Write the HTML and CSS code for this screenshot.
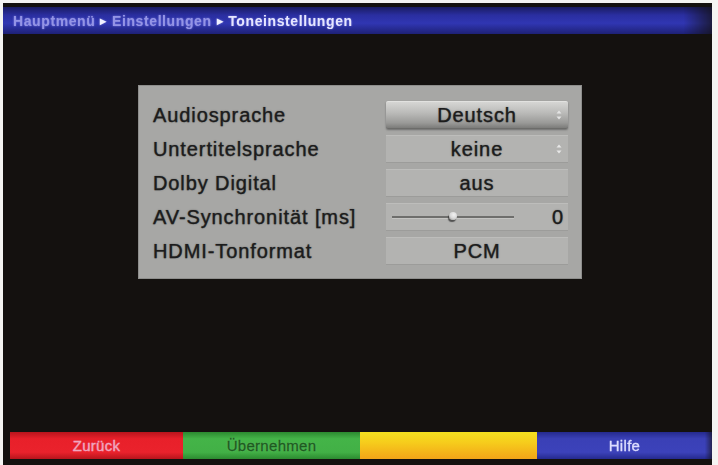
FILE: index.html
```html
<!DOCTYPE html>
<html lang="de">
<head>
<meta charset="utf-8">
<title>Toneinstellungen</title>
<link rel="stylesheet" href="styles.css">
</head>
<body>
<div class="screen">
  <div class="topbar">
    <span class="crumb">Hauptmenü</span>
    <span class="sep">▸</span>
    <span class="crumb">Einstellungen</span>
    <span class="sep">▸</span>
    <span class="crumb current">Toneinstellungen</span>
  </div>

  <div class="panel">
    <div class="row">
      <div class="label">Audiosprache</div>
      <div class="value selected">Deutsch
        <svg class="arrows" viewBox="0 0 6 10" width="6" height="10"><path d="M3 0.5 L5.5 3.5 L0.5 3.5 Z M3 9.5 L5.5 6.5 L0.5 6.5 Z" fill="#e4e4e4"/></svg>
      </div>
    </div>
    <div class="row">
      <div class="label">Untertitelsprache</div>
      <div class="value">keine
        <svg class="arrows" viewBox="0 0 6 10" width="6" height="10"><path d="M3 0.5 L5.5 3.5 L0.5 3.5 Z M3 9.5 L5.5 6.5 L0.5 6.5 Z" fill="#e8e8e8"/></svg>
      </div>
    </div>
    <div class="row">
      <div class="label">Dolby Digital</div>
      <div class="value">aus</div>
    </div>
    <div class="row">
      <div class="label">AV-Synchronität [ms]</div>
      <div class="value slider-box">
        <div class="track"><span class="knob"></span></div>
        <span class="num">0</span>
      </div>
    </div>
    <div class="row">
      <div class="label">HDMI-Tonformat</div>
      <div class="value">PCM</div>
    </div>
  </div>

  <div class="spacer"></div>

  <div class="footer">
    <div class="key red">Zurück</div>
    <div class="key green">Übernehmen</div>
    <div class="key yellow"></div>
    <div class="key blue">Hilfe</div>
  </div>
</div>
</body>
</html>
```

FILE: styles.css
```css
html, body {
  margin: 0;
  padding: 0;
  background: #f4f4f2;
  width: 718px;
  height: 465px;
  overflow: hidden;
}

.screen {
  margin: 3px 0 0 3px;
  width: 709px;
  height: 462px;
  background: #14110f;
  display: flex;
  flex-direction: column;
  font-family: "Liberation Sans", Arial, sans-serif;
}

.topbar {
  margin-top: 4px;
  height: 27px;
  display: flex;
  align-items: center;
  gap: 5px;
  padding-left: 10px;
  background: linear-gradient(to bottom, #1a1c62 0%, #2a2ea0 30%, #3036b2 60%, #1e2176 100%);
  font-size: 14px;
  font-weight: bold;
  letter-spacing: 0.6px;
  color: #9494e6;
  text-shadow: 0 0 2px rgba(180, 180, 255, 0.6);
  -webkit-mask-image: linear-gradient(to right, #000 96%, rgba(0,0,0,0.3) 100%);
}

.crumb.current {
  color: #e6e6ff;
}

.sep {
  color: #f0f0ff;
  font-size: 12px;
}

.panel {
  margin: 51px 0 0 135px;
  width: 444px;
  box-sizing: border-box;
  padding: 15px 13px 13px 14px;
  background: #a7a7a5;
  border: 1px solid #8e8e8c;
  display: flex;
  flex-direction: column;
  gap: 6px;
}

.row {
  display: flex;
  align-items: center;
  justify-content: space-between;
  height: 28px;
}

.label,
.value {
  font-size: 20px;
  letter-spacing: 0.9px;
  color: #1c1c1c;
  -webkit-text-stroke: 0.25px #1c1c1c;
  text-shadow: 0 0 1.5px rgba(30, 30, 30, 0.6);
}

.value {
  position: relative;
  width: 182px;
  height: 28px;
  box-sizing: border-box;
  display: flex;
  align-items: center;
  justify-content: center;
  background: #b3b3b1;
  border-top: 1px solid #bdbdbb;
  border-bottom: 1px solid #9c9c9a;
}

.value.selected {
  background: linear-gradient(to bottom, #d6d6d4 0%, #bcbcba 40%, #9a9a98 80%, #7c7c7a 100%);
  border-top: 1px solid #e2e2e0;
  border-bottom: 1px solid #6c6c6a;
  box-shadow: 0 1px 2px rgba(0, 0, 0, 0.35);
  border-radius: 2px;
}

.arrows {
  position: absolute;
  right: 6px;
  top: 8px;
}

.slider-box {
  justify-content: space-between;
  padding: 0 4px 0 6px;
}

.track {
  position: relative;
  width: 122px;
  height: 2px;
  background: #6e6e6c;
  border-bottom: 1px solid #c4c4c2;
}

.knob {
  position: absolute;
  left: 57px;
  top: -4px;
  width: 8px;
  height: 8px;
  border-radius: 50%;
  background: radial-gradient(circle at 60% 35%, #f2f2f2 0%, #d8d8d8 50%, #8a8a88 100%);
  box-shadow: -1px 2px 1px rgba(40, 40, 40, 0.7);
}

.spacer {
  flex: 1;
}

.footer {
  margin: 0 0 6px 7px;
  height: 27px;
  display: grid;
  grid-template-columns: 173px 177px 177px 175px;
  font-size: 15px;
  letter-spacing: 0.3px;
}

.key {
  display: flex;
  align-items: center;
  justify-content: center;
  -webkit-text-stroke: 0.3px currentColor;
  text-shadow: 0 0 1.5px rgba(255, 255, 255, 0.25);
}

.red {
  background: linear-gradient(to bottom, #b8141c 0%, #e8202a 25%, #ea222c 75%, #b8141c 100%);
  color: #f0a6c0;
}

.green {
  background: linear-gradient(to bottom, #2c8a30 0%, #44b448 25%, #42b046 75%, #2c8a30 100%);
  color: #1d5a20;
}

.yellow {
  background: linear-gradient(to bottom, #f4e020 0%, #f6cc1c 40%, #f2a418 100%);
}

.blue {
  background: linear-gradient(to bottom, #252a8e 0%, #3a40b6 25%, #3c42ba 75%, #252a8e 100%);
  color: #dcdcff;
  -webkit-mask-image: linear-gradient(to right, #000 96%, rgba(0,0,0,0.4) 100%);
}
```
